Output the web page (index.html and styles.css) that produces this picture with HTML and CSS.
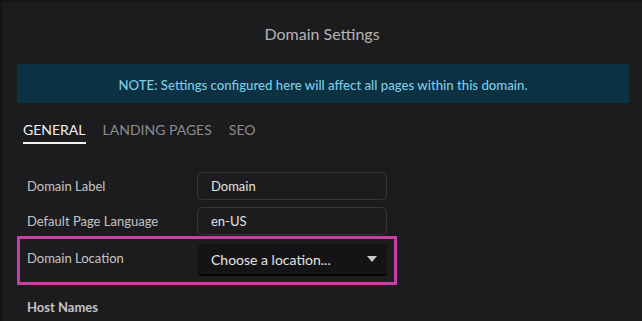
FILE: index.html
```html
<!DOCTYPE html>
<html>
<head>
<meta charset="utf-8">
<link rel="stylesheet" href="styles.css">
</head>
<body>
<div class="panel">
  <h1 class="title">Domain Settings</h1>
  <div class="note">NOTE: Settings configured here will affect all pages within this domain.</div>
  <nav class="tabs">
    <span class="tab active">GENERAL</span>
    <span class="tab">LANDING PAGES</span>
    <span class="tab">SEO</span>
  </nav>
  <div class="form">
    <div class="row">
      <label class="label">Domain Label</label>
      <div class="input">Domain</div>
    </div>
    <div class="row">
      <label class="label">Default Page Language</label>
      <div class="input">en-US</div>
    </div>
    <div class="row highlight">
      <label class="label">Domain Location</label>
      <div class="select">
        <span>Choose a location...</span>
        <svg class="caret" width="10" height="6" viewBox="0 0 10 6"><path d="M0 0H10L5 6Z" fill="#c8c8c8"/></svg>
      </div>
    </div>
    <div class="section">Host Names</div>
  </div>
</div>
</body>
</html>
```
FILE: styles.css
```css
html, body {
  margin: 0;
  padding: 0;
  background: #141416;
  height: 100%;
  overflow: hidden;
}
body {
  font-family: Lato, "Open Sans", sans-serif;
}
.panel {
  margin: 2px 0 0 2px;
  background: #1c1c1e;
  height: 319px;
  overflow: hidden;
  padding-top: 23px;
  box-sizing: border-box;
}
.title {
  margin: 0;
  font-size: 16px;
  font-weight: 400;
  color: #b4b4b6;
  text-align: center;
  line-height: 18px;
}
.note {
  margin: 21px 13px 0 15px;
  height: 39px;
  background: #0b3142;
  color: #7fcbe6;
  font-size: 13.2px;
  font-weight: 500;
  display: flex;
  align-items: center;
  justify-content: center;
  padding-top: 3px;
  box-sizing: border-box;
}
.tabs {
  display: flex;
  gap: 17px;
  margin: 18px 0 0 21px;
}
.tab {
  font-size: 14px;
  color: #8c8c8e;
  padding-bottom: 4px;
  line-height: 17px;
  border-bottom: 2px solid transparent;
}
.tab.active {
  color: #f2f2f2;
  border-bottom-color: #f2f2f2;
}
.form {
  margin-top: 28px;
  padding-left: 15px;
}
.row {
  display: flex;
  align-items: center;
  width: 380px;
  box-sizing: border-box;
  padding-left: 10px;
  margin-bottom: 7px;
}
.label {
  width: 170px;
  font-size: 13px;
  color: #c4c4c6;
}
.input {
  width: 190px;
  height: 28px;
  box-sizing: border-box;
  border: 1px solid #37373a;
  border-radius: 6px;
  padding-left: 13px;
  font-size: 13px;
  color: #e2e2e4;
  display: flex;
  align-items: center;
}
.row.highlight {
  border: 3px solid #c63fa6;
  height: 49px;
  padding: 5px 0 0 7px;
  align-items: flex-start;
  margin-top: -6px;
  width: 380px;
}
.highlight .label {
  line-height: 28px;
}
.select {
  width: 189px;
  height: 30px;
  box-sizing: border-box;
  background: #141416;
  border-radius: 4px;
  box-shadow: 0 2px 0 #050506;
  margin-left: 1px;
  padding: 0 10px 0 13px;
  display: flex;
  align-items: center;
  justify-content: space-between;
  font-size: 14px;
  color: #e4e4e6;
}
.caret {
  display: block;
}
.section {
  margin-top: 14px;
  padding-left: 10px;
  font-size: 13px;
  font-weight: 700;
  color: #c4c4c6;
}
```
